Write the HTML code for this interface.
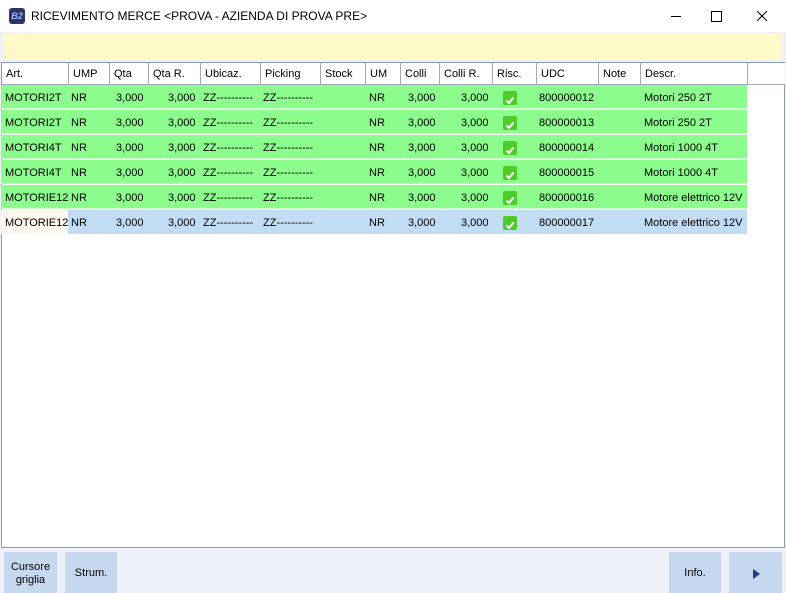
<!DOCTYPE html>
<html><head><style>
*{margin:0;padding:0;box-sizing:border-box}
body{width:786px;height:593px;background:#eef1f9;font-family:"Liberation Sans",Tahoma,sans-serif;font-size:11px;color:#000;position:relative;overflow:hidden}
.title{position:absolute;left:0;top:0;width:786px;height:32px;background:#fff}
.icon{position:absolute;left:9px;top:8px;width:16px;height:16px;background:#2c3563;border-radius:3px;color:#9ab8ff;font-size:9px;font-style:italic;font-weight:bold;line-height:16px;text-align:center}
.ttext{position:absolute;left:31px;top:9px;font-size:12px}
.yb{position:absolute;left:3px;top:33px;width:779px;height:27px;background:#fff8c8}
.grid{position:absolute;left:1px;top:62px;width:784px;height:486px;background:#fff;border:1px solid #8a9cb4}
.c{position:absolute;height:22px;line-height:23px;padding-left:4px;white-space:nowrap;overflow:hidden}
.h{top:0;border-right:1px solid #a0aab8;border-bottom:1px solid #a0aab8;background:#fff}
.r{position:absolute;left:0;width:746px;height:24px;line-height:26px}
.r span{position:absolute;top:0;white-space:nowrap}
.g{background:#8cfc8c;border-bottom:1px solid #c8f8c8}
.b{background:#c2dcf4}
.chk{position:absolute;width:14px;height:14px;top:6px;background:#4fcc2c;border-radius:2px}
.btn{position:absolute;top:552px;height:41px;background:#c6d8f0;font-size:11px;text-align:center;display:flex;align-items:center;justify-content:center;line-height:13px;padding-top:2px}
</style></head><body>
<div class="title"><div class="icon">B2</div><div class="ttext">RICEVIMENTO MERCE &lt;PROVA - AZIENDA DI PROVA PRE&gt;</div>
<svg style="position:absolute;left:660px;top:8px" width="110" height="16"><line x1="11" y1="8.5" x2="21" y2="8.5" stroke="#000"/><rect x="51.5" y="3.5" width="10" height="10" fill="none" stroke="#000"/><path d="M97 3 L107 13 M107 3 L97 13" stroke="#000"/></svg></div>
<div class="yb"></div>
<div class="grid">
<div class="c h" style="left:0;width:67px">Art.</div>
<div class="c h" style="left:67px;width:41px">UMP</div>
<div class="c h" style="left:108px;width:39px">Qta</div>
<div class="c h" style="left:147px;width:52px">Qta R.</div>
<div class="c h" style="left:199px;width:60px">Ubicaz.</div>
<div class="c h" style="left:259px;width:60px">Picking</div>
<div class="c h" style="left:319px;width:45px">Stock</div>
<div class="c h" style="left:364px;width:35px">UM</div>
<div class="c h" style="left:399px;width:39px">Colli</div>
<div class="c h" style="left:438px;width:53px">Colli R.</div>
<div class="c h" style="left:491px;width:44px">Risc.</div>
<div class="c h" style="left:535px;width:62px">UDC</div>
<div class="c h" style="left:597px;width:42px">Note</div>
<div class="c h" style="left:639px;width:107px">Descr.</div>
<div class="c h" style="left:746px;width:37px;border-right:none"></div>
</div>
<div class="btn" style="left:4px;width:53px">Cursore<br>griglia</div>
<div class="btn" style="left:65px;width:52px">Strum.</div>
<div class="btn" style="left:669px;width:52px">Info.</div>
<div class="btn" style="left:729px;width:53px"><svg width="10" height="12"><path d="M2 1 L9 6 L2 11Z" fill="#1f3f7f"/></svg></div>
<div style="position:absolute;left:1px;top:85px">
<div class="r g" style="top:0"><span style="left:4px">MOTORI2T</span><span style="left:70px">NR</span><span style="left:115px">3,000</span><span style="left:167px">3,000</span><span style="left:202px">ZZ----------</span><span style="left:262px">ZZ----------</span><span style="left:368px">NR</span><span style="left:407px">3,000</span><span style="left:460px">3,000</span><i class="chk" style="left:502px"><svg width="14" height="14"><path d="M3.5 7.5 L6 10 L10.5 4.5" stroke="#fff" stroke-width="2" fill="none"/></svg></i><span style="left:538px">800000012</span><span style="left:643px">Motori 250 2T</span></div>
<div class="r g" style="top:25px"><span style="left:4px">MOTORI2T</span><span style="left:70px">NR</span><span style="left:115px">3,000</span><span style="left:167px">3,000</span><span style="left:202px">ZZ----------</span><span style="left:262px">ZZ----------</span><span style="left:368px">NR</span><span style="left:407px">3,000</span><span style="left:460px">3,000</span><i class="chk" style="left:502px"><svg width="14" height="14"><path d="M3.5 7.5 L6 10 L10.5 4.5" stroke="#fff" stroke-width="2" fill="none"/></svg></i><span style="left:538px">800000013</span><span style="left:643px">Motori 250 2T</span></div>
<div class="r g" style="top:50px"><span style="left:4px">MOTORI4T</span><span style="left:70px">NR</span><span style="left:115px">3,000</span><span style="left:167px">3,000</span><span style="left:202px">ZZ----------</span><span style="left:262px">ZZ----------</span><span style="left:368px">NR</span><span style="left:407px">3,000</span><span style="left:460px">3,000</span><i class="chk" style="left:502px"><svg width="14" height="14"><path d="M3.5 7.5 L6 10 L10.5 4.5" stroke="#fff" stroke-width="2" fill="none"/></svg></i><span style="left:538px">800000014</span><span style="left:643px">Motori 1000 4T</span></div>
<div class="r g" style="top:75px"><span style="left:4px">MOTORI4T</span><span style="left:70px">NR</span><span style="left:115px">3,000</span><span style="left:167px">3,000</span><span style="left:202px">ZZ----------</span><span style="left:262px">ZZ----------</span><span style="left:368px">NR</span><span style="left:407px">3,000</span><span style="left:460px">3,000</span><i class="chk" style="left:502px"><svg width="14" height="14"><path d="M3.5 7.5 L6 10 L10.5 4.5" stroke="#fff" stroke-width="2" fill="none"/></svg></i><span style="left:538px">800000015</span><span style="left:643px">Motori 1000 4T</span></div>
<div class="r g" style="top:100px"><span style="left:4px">MOTORIE12</span><span style="left:70px">NR</span><span style="left:115px">3,000</span><span style="left:167px">3,000</span><span style="left:202px">ZZ----------</span><span style="left:262px">ZZ----------</span><span style="left:368px">NR</span><span style="left:407px">3,000</span><span style="left:460px">3,000</span><i class="chk" style="left:502px"><svg width="14" height="14"><path d="M3.5 7.5 L6 10 L10.5 4.5" stroke="#fff" stroke-width="2" fill="none"/></svg></i><span style="left:538px">800000016</span><span style="left:643px">Motore elettrico 12V</span></div>
<div class="r b" style="top:125px"><span style="left:0;width:67px;height:24px;background:#fdf8ee;padding-left:4px">MOTORIE12</span><span style="left:70px">NR</span><span style="left:115px">3,000</span><span style="left:167px">3,000</span><span style="left:202px">ZZ----------</span><span style="left:262px">ZZ----------</span><span style="left:368px">NR</span><span style="left:407px">3,000</span><span style="left:460px">3,000</span><i class="chk" style="left:502px"><svg width="14" height="14"><path d="M3.5 7.5 L6 10 L10.5 4.5" stroke="#fff" stroke-width="2" fill="none"/></svg></i><span style="left:538px">800000017</span><span style="left:643px">Motore elettrico 12V</span></div>
</div>
</body></html>
